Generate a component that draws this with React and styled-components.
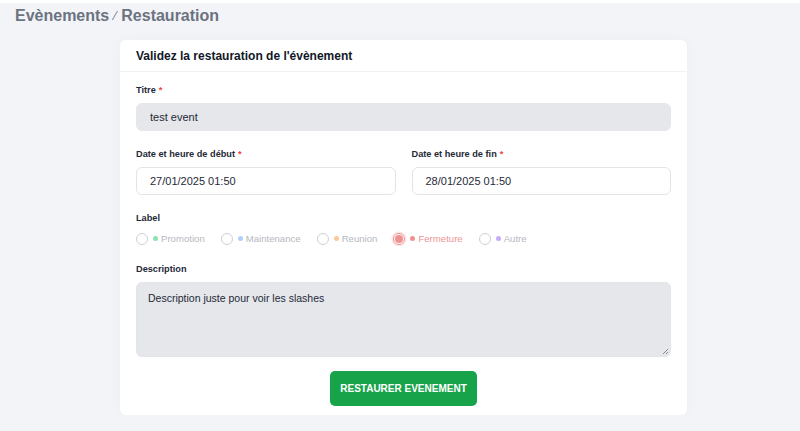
import React from 'react';
import styled, { createGlobalStyle } from 'styled-components';

const GlobalStyle = createGlobalStyle`
    body {
        margin: 0;
        background: #f3f4f8;
        font-family: "Liberation Sans", Arial, sans-serif;
        color: #111827;
    }
`

const TopStrip = styled.div`
    height: 3px;
    background: #ffffff;
`

const Breadcrumb = styled.div`
    display: flex;
    align-items: center;
    gap: 5px;
    height: 25px;
    padding-left: 15px;
    font-size: 16px;
    font-weight: 700;
    color: #6b7280;
`

const Slash = styled.span`
    font-size: 12px;
    font-weight: 400;
`

const Card = styled.div`
    width: 567px;
    margin: 12px 0 0 120px;
    background: #fff;
    border-radius: 6px;
    box-shadow: 0 0 14px rgba(30, 40, 80, 0.03);
`

const CardHeader = styled.div`
    display: flex;
    align-items: center;
    height: 31px;
    padding: 0 16px;
    border-bottom: 1px solid #f1f2f4;
    font-size: 12px;
    font-weight: 700;
    color: #111827;
`

const CardBody = styled.div`
    display: flex;
    flex-direction: column;
    gap: 15px;
    padding: 10px 16px 9px;
`

const Field = styled.div`
    display: flex;
    flex-direction: column;
    gap: 5px;
    flex: 1;
`

const Row = styled.div`
    display: flex;
    gap: 16px;
`

const Label = styled.label`
    font-size: 9.2px;
    line-height: 16px;
    font-weight: 700;
    color: #1f2937;
`

const Required = styled.span`
    color: #ef4444;
    margin-left: 3px;
`

const Input = styled.div`
    box-sizing: border-box;
    height: 28px;
    display: flex;
    align-items: center;
    padding: 0 13px;
    border-radius: 6px;
    font-size: 11px;
    color: #1f2937;
    background: ${props => props.disabled ? '#e5e7eb' : '#fff'};
    border: 1px solid ${props => props.disabled ? '#e5e7eb' : '#e2e4e8'};
`

const TextArea = styled.div`
    position: relative;
    box-sizing: border-box;
    height: 75px;
    padding: 8px 11px;
    border-radius: 6px;
    border: 1px solid #e2e5e9;
    background: #e5e7eb;
    font-size: 10.5px;
    line-height: 14px;
    color: #1f2937;
`

const Grip = styled.svg`
    position: absolute;
    right: 2px;
    bottom: 2px;
`

const RadioGroup = styled.div`
    display: flex;
    align-items: center;
    gap: 16px;
    height: 15px;
    opacity: 0.5;
`

const RadioItem = styled.div`
    display: flex;
    align-items: center;
    font-size: 9.6px;
    color: ${props => props.checked ? '#dc2626' : '#6b7280'};
`

const Circle = styled.span`
    box-sizing: border-box;
    width: 12px;
    height: 12px;
    border-radius: 50%;
    border: 1px solid ${props => props.checked ? '#dc2626' : '#9ca3af'};
    display: flex;
    align-items: center;
    justify-content: center;
    margin-right: 5px;
    box-shadow: ${props => props.checked ? '0 0 0 1.5px #fecaca' : 'none'};
    &::after {
        content: '';
        display: ${props => props.checked ? 'block' : 'none'};
        width: 8px;
        height: 8px;
        border-radius: 50%;
        background: #dc2626;
    }
`

const Dot = styled.span`
    width: 5px;
    height: 5px;
    border-radius: 50%;
    margin-right: 3px;
    background: ${props => props.color};
`

const ButtonRow = styled.div`
    display: flex;
    justify-content: center;
    margin-top: -1px;
`

const Button = styled.button`
    height: 35px;
    width: 147px;
    border: none;
    border-radius: 5px;
    background: #17a34a;
    color: #fff;
    font-family: inherit;
    font-size: 10px;
    font-weight: 700;
    white-space: nowrap;
    padding: 0;
`

const labels = [
    { name: 'Promotion', color: '#22c55e' },
    { name: 'Maintenance', color: '#60a5fa' },
    { name: 'Reunion', color: '#fb923c' },
    { name: 'Fermeture', color: '#dc2626', checked: true },
    { name: 'Autre', color: '#8b5cf6' }
]

export default function App() {
    return (
        <>
            <GlobalStyle />
            <TopStrip />
            <Breadcrumb>
                Evènements <Slash>⁄</Slash> Restauration
            </Breadcrumb>
            <Card>
                <CardHeader>Validez la restauration de l'évènement</CardHeader>
                <CardBody>
                    <Field>
                        <Label>Titre<Required>*</Required></Label>
                        <Input disabled>test event</Input>
                    </Field>
                    <Row>
                        <Field>
                            <Label>Date et heure de début<Required>*</Required></Label>
                            <Input>27/01/2025 01:50</Input>
                        </Field>
                        <Field>
                            <Label>Date et heure de fin<Required>*</Required></Label>
                            <Input>28/01/2025 01:50</Input>
                        </Field>
                    </Row>
                    <Field>
                        <Label>Label</Label>
                        <RadioGroup>
                            {labels.map(l => (
                                <RadioItem key={l.name} checked={l.checked}>
                                    <Circle checked={l.checked} />
                                    <Dot color={l.color} />
                                    {l.name}
                                </RadioItem>
                            ))}
                        </RadioGroup>
                    </Field>
                    <Field>
                        <Label>Description</Label>
                        <TextArea>
                            Description juste pour voir les slashes
                            <Grip width="6" height="6" viewBox="0 0 6 6">
                                <path d="M1 6 L6 1 M4 6 L6 4" stroke="#6b7280" strokeWidth="0.8" />
                            </Grip>
                        </TextArea>
                    </Field>
                    <ButtonRow>
                        <Button>RESTAURER EVENEMENT</Button>
                    </ButtonRow>
                </CardBody>
            </Card>
        </>
    );
}
